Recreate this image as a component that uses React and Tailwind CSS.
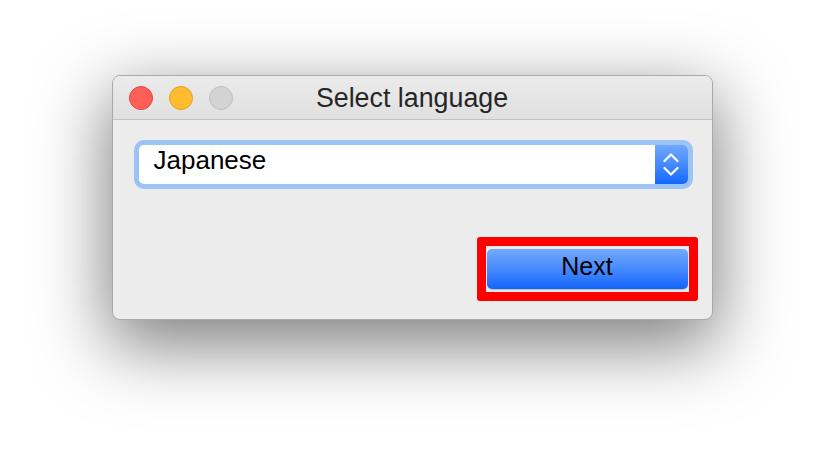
import React from "react";

function TrafficLights() {
  return (
    <div className="absolute left-[16px] top-0 flex h-full items-center gap-[16px]">
      <span className="h-[24px] w-[24px] rounded-full border border-[#e2463f] bg-[#fe5f57]" />
      <span className="h-[24px] w-[24px] rounded-full border border-[#dfa123] bg-[#febc2e]" />
      <span className="h-[24px] w-[24px] rounded-full border border-[#c0c0c0] bg-[#d3d3d3]" />
    </div>
  );
}

function LanguageSelect({ value }) {
  return (
    <div className="flex h-[39px] items-stretch rounded-[5px] bg-white shadow-[0_0_0_5px_#9cc3f5]">
      <div className="flex-1 pl-[15px] pt-[1px] text-[26px] leading-[29px] text-black">{value}</div>
      <div className="flex w-[33px] items-center justify-center rounded-r-[5px] bg-gradient-to-b from-[#6fa8fd] to-[#1166fc]">
        <svg width="16" height="23" viewBox="0 0 16 23" fill="none" stroke="white" strokeWidth="2.2" strokeLinecap="round" strokeLinejoin="round">
          <path d="M1.5 8 L8 1.5 L14.5 8" />
          <path d="M1.5 15 L8 21.5 L14.5 15" />
        </svg>
      </div>
    </div>
  );
}

export default function App() {
  return (
    <div
      className="flex min-h-[468px] w-full justify-center bg-white pt-[75px]"
      style={{ fontFamily: '"Liberation Sans", Arial, sans-serif' }}
    >
      <div className="flex h-[245px] w-[601px] flex-col overflow-hidden rounded-[8px] border border-[#a9a9a9] bg-[#ececec] shadow-[0_22px_70px_4px_rgba(0,0,0,0.5)]">
        <div className="relative flex h-[44px] shrink-0 items-center justify-center border-b border-[#c4c4c4] bg-gradient-to-b from-[#ebebeb] to-[#e0e0e0]">
          <TrafficLights />
          <span className="pt-[2px] text-[26.8px] leading-[29px] text-[#262626]">Select language</span>
        </div>

        <div className="flex flex-1 flex-col pl-[26px] pr-[24px] pt-[25px]">
          <LanguageSelect value="Japanese" />

          <div className="mt-[65px] flex justify-end">
            <button className="relative h-[40px] w-[201px] rounded-[5px] bg-gradient-to-b from-[#74aafd] to-[#0f64fc] pb-[6px] text-[25px] leading-[28px] text-black shadow-[0_1px_1px_rgba(0,0,0,0.2)]">
              Next
              <span className="pointer-events-none absolute -bottom-[12px] -left-[10px] -right-[10px] -top-[12px] rounded-[3px] border-[9px] border-[#ff0000]" />
            </button>
          </div>
        </div>
      </div>
    </div>
  );
}
